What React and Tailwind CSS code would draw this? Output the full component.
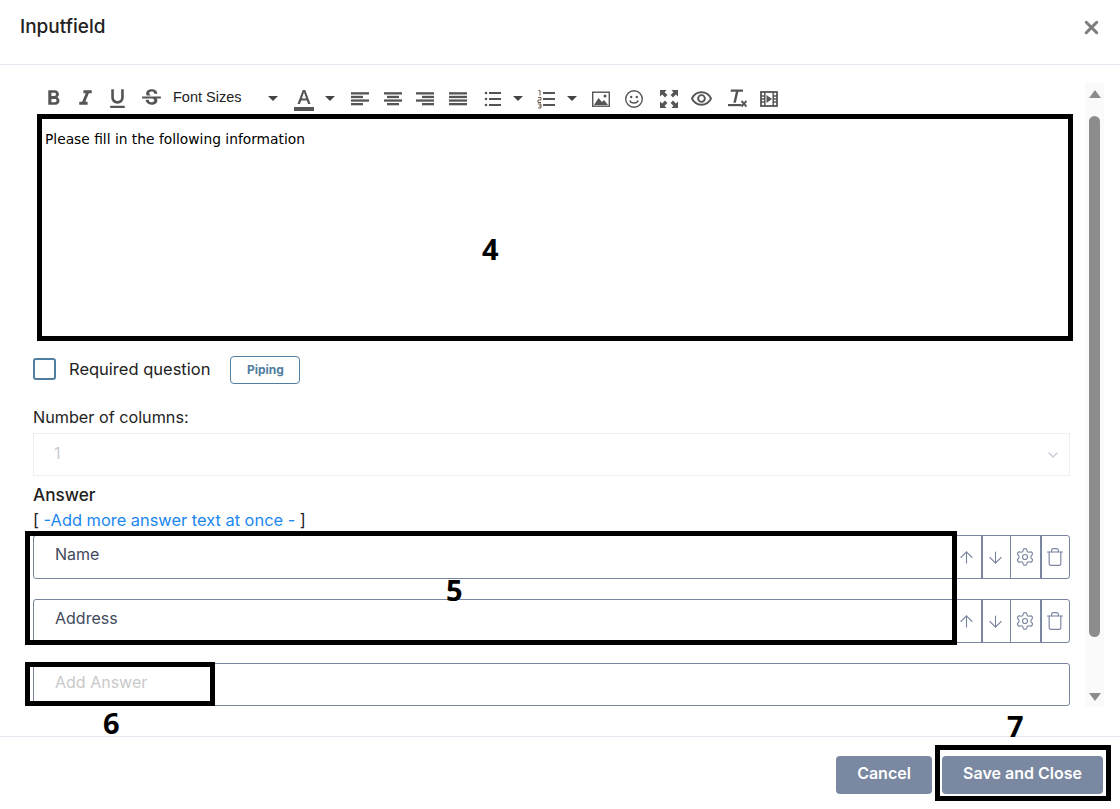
import React from 'react'
import { ArrowUp, ArrowDown, Settings, Trash, ChevronDown, X } from 'lucide-react'
import {
  MdFormatBold, MdFormatItalic, MdFormatUnderlined, MdStrikethroughS,
  MdFormatColorText, MdOutlineRemoveRedEye,
} from 'react-icons/md'

const Caret = ({ className }) => (
  <span className={`w-0 h-0 border-x-[5px] border-x-transparent border-t-[5px] border-t-[#444] ${className}`} />
)

const Tool = ({ icon: Icon, size = 25, className }) => (
  <span className={`w-5 flex justify-center text-[#555] ${className}`}>
    <Icon size={size} className="shrink-0" />
  </span>
)

const Svg = ({ children, className }) => (
  <span className={`w-5 flex justify-center ${className}`}>
    <svg width="20" height="20" viewBox="0 0 20 20" fill="#555" className="shrink-0">{children}</svg>
  </span>
)

const Bars = ({ rows, className }) => (
  <Svg className={className}>
    {rows.map(([x, w], i) => (
      <rect key={i} x={x} y={3.2 + i * 3.6} width={w} height="2.3" />
    ))}
  </Svg>
)

const BulletList = ({ className }) => (
  <Svg className={className}>
    <rect x="6" y="3" width="12" height="2" />
    <rect x="6" y="9" width="12" height="2" />
    <rect x="6" y="15" width="12" height="2" />
    <circle cx="3" cy="4" r="1.3" />
    <circle cx="3" cy="10" r="1.3" />
    <circle cx="3" cy="16" r="1.3" />
  </Svg>
)

const NumberList = ({ className }) => (
  <Svg className={className}>
    <rect x="7" y="3" width="12" height="2" />
    <rect x="7" y="9" width="12" height="2" />
    <rect x="7" y="15" width="12" height="2" />
    <path d="M2.5 1.5h1.5v5M2 8.5h3v2.5h-3v2.5h3M2 15h3v4h-3M3 17h2" fill="none" stroke="#6b5a4a" strokeWidth="1" />
  </Svg>
)

const ImageIcon = ({ className }) => (
  <Svg className={className}>
    <rect x="1.7" y="3.2" width="16.6" height="14" fill="none" stroke="#555" strokeWidth="1.4" />
    <path d="M3 16l4.5-7 3.5 4 2-2 4 5z" />
    <circle cx="14" cy="7" r="1.5" />
  </Svg>
)

const SmileIcon = ({ className }) => (
  <Svg className={className}>
    <circle cx="10" cy="10" r="8.3" fill="none" stroke="#555" strokeWidth="1.4" />
    <circle cx="7.2" cy="8" r="1.2" />
    <circle cx="12.8" cy="8" r="1.2" />
    <path d="M5.8 11.5c1 3.4 7.4 3.4 8.4 0" fill="none" stroke="#555" strokeWidth="1.4" />
  </Svg>
)

const ExpandIcon = ({ className }) => (
  <Svg className={className}>
    <path d="M1 1h6.5L5.6 3.2 8.4 6 6 8.4 3.2 5.6 1 7.5z" />
    <path d="M19 1h-6.5l1.9 2.2L11.6 6 14 8.4l2.8-2.8L19 7.5z" />
    <path d="M1 19h6.5l-1.9-2.2L8.4 14 6 11.6 3.2 14.4 1 12.5z" />
    <path d="M19 19h-6.5l1.9-2.2L11.6 14l2.4-2.4 2.8 2.8 2.2-1.9z" />
  </Svg>
)

const ClearIcon = ({ className }) => (
  <Svg className={className}>
    <path d="M4 0.5h12v2.2h-4.6l-2.6 11h-2.5l2.6-11H3.5z" />
    <rect x="1" y="15" width="13.5" height="2.2" />
    <path d="M14.5 12l5 5.5M19.5 12l-5 5.5" fill="none" stroke="#555" strokeWidth="1.9" />
  </Svg>
)

const FilmIcon = ({ className }) => (
  <Svg className={className}>
    <rect x="2" y="3" width="16" height="14" fill="none" stroke="#555" strokeWidth="1.8" />
    <path d="M5.8 3v14M14.2 3v14M2 7h3.8M2 10h3.8M2 13h3.8M14.2 7h3.8M14.2 10h3.8M14.2 13h3.8" fill="none" stroke="#555" strokeWidth="1.5" />
    <path d="M7.5 6l5.5 4-5.5 4z" />
  </Svg>
)

const Toolbar = () => (
  <div className="h-[33px] flex items-center pl-[10px]">
    <Tool icon={MdFormatBold} />
    <Tool icon={MdFormatItalic} className="ml-3" />
    <Tool icon={MdFormatUnderlined} className="ml-3" />
    <Tool icon={MdStrikethroughS} className="ml-[14px]" />
    <span className="ml-3 w-[71px] pb-[2px] text-[14.5px] text-[#222] font-['Liberation_Sans',sans-serif] whitespace-nowrap">Font Sizes</span>
    <Caret className="ml-[24px]" />
    <Tool icon={MdFormatColorText} size={24} className="ml-4" />
    <Caret className="ml-[11px]" />
    <Bars rows={[[1, 18], [1, 12], [1, 18], [1, 12]]} className="ml-[15px]" />
    <Bars rows={[[1, 18], [4, 12], [1, 18], [4, 12]]} className="ml-[13px]" />
    <Bars rows={[[1, 18], [7, 12], [1, 18], [7, 12]]} className="ml-3" />
    <Bars rows={[[1, 18], [1, 18], [1, 18], [1, 18]]} className="ml-[13px]" />
    <BulletList className="ml-[15px]" />
    <Caret className="ml-[10px]" />
    <NumberList className="ml-[13px]" />
    <Caret className="ml-[11px]" />
    <ImageIcon className="ml-[14px]" />
    <SmileIcon className="ml-[13px]" />
    <ExpandIcon className="ml-[15px]" />
    <Tool icon={MdOutlineRemoveRedEye} size={23} className="ml-3" />
    <ClearIcon className="ml-4" />
    <FilmIcon className="ml-3" />
  </div>
)

const AnswerRow = ({ value }) => (
  <div className="h-11 flex border border-[#7a869f] rounded-[3px] mb-5">
    <div className="flex-1 pl-[21px] pt-[8px] text-[16px] leading-[20px] text-[#3f4a5c]">{value}</div>
    <div className="flex text-[#7a869f]">
      <span className="w-[29px] pr-[2px] flex items-center justify-center border-l border-[#7a869f]"><ArrowUp size={19} strokeWidth={1.4} /></span>
      <span className="w-[29px] pr-[2px] flex items-center justify-center border-l-2 border-[#7a869f]"><ArrowDown size={19} strokeWidth={1.4} /></span>
      <span className="w-[30px] pr-[1px] flex items-center justify-center border-l border-[#7a869f]"><Settings size={20} strokeWidth={1.4} /></span>
      <span className="w-[29px] pr-[2px] flex items-center justify-center border-l-2 border-[#7a869f]"><Trash size={20} strokeWidth={1.4} /></span>
    </div>
  </div>
)

const Scrollbar = () => (
  <div className="w-[19px] h-[624px] mt-[18px] ml-[15px] bg-[#fafafa] flex flex-col items-center">
    <span className="mt-[7px] w-0 h-0 border-x-[6px] border-x-transparent border-b-[8px] border-b-[#8c8c8c]" />
    <span className="mt-[18px] w-[11px] h-[521px] rounded-full bg-[#8c8c8c]" />
    <span className="mt-[56px] w-0 h-0 border-x-[6px] border-x-transparent border-t-[8px] border-t-[#8c8c8c]" />
  </div>
)

// black annotation boxes + numbers drawn on top of the screenshot
const Annotations = () => (
  <>
    <div className="absolute left-[37px] top-[114px] w-[1036px] h-[227px] border-[5px] border-black" />
    <div className="absolute left-[25px] top-[531px] w-[932px] h-[114px] border-[5px] border-black" />
    <div className="absolute left-[25px] top-[662px] w-[190px] h-[44px] border-[5px] border-black" />
    <div className="absolute left-[935px] top-[745px] w-[176px] h-[56px] border-[5px] border-black" />
    <span className="absolute left-[482px] top-[229px] text-[29px] leading-[40px] font-bold text-black font-['Open_Sans',sans-serif]">4</span>
    <span className="absolute left-[446px] top-[570px] text-[29px] leading-[40px] font-bold text-black font-['Open_Sans',sans-serif]">5</span>
    <span className="absolute left-[103px] top-[703px] text-[29px] leading-[40px] font-bold text-black font-['Open_Sans',sans-serif]">6</span>
    <span className="absolute left-[1007px] top-[706px] text-[29px] leading-[40px] font-bold text-black font-['Open_Sans',sans-serif]">7</span>
  </>
)

export default function App() {
  return (
    <div className="relative w-[1120px] h-[809px] overflow-hidden bg-white flex flex-col font-['Inter',sans-serif]">
      <header className="h-[65px] shrink-0 border-b border-[#e6e9f2] flex items-center justify-between pl-5 pr-[18px] pb-[9px]">
        <h1 className="text-[19px] font-medium text-[#222]">Inputfield</h1>
        <X size={21} strokeWidth={3.5} className="text-[#7d7d7d]" />
      </header>

      <div className="h-[672px] shrink-0 border-b border-[#e6e9f2] flex">
        <div className="w-[1070px] shrink-0 pl-[33px] pt-[17px]">
          <Toolbar />
          <div className="ml-[7px] mt-[3px] h-[220px] pl-[5px] pt-[12px] text-[13.8px] leading-[18px] text-black font-['DejaVu_Sans',sans-serif]">
            Please fill in the following information
          </div>

          <div className="mt-[17px] h-[28px] flex items-center">
            <span className="w-[23px] h-[22px] rounded-[3px] border-2 border-[#4f7ea0]" />
            <span className="ml-[13px] text-[16.5px] text-[#222]">Required question</span>
            <span className="ml-5 mt-[2px] w-[70px] h-[28px] rounded-[4px] border border-[#4f7ea0] flex items-center justify-center text-[12px] font-bold text-[#4f7ea0]">Piping</span>
          </div>

          <label className="block mt-[22px] h-[28px] text-[16.2px] leading-[24px] text-[#222]">Number of columns:</label>
          <div className="h-[43px] border border-[#eeeeee] flex items-center justify-between pl-5 pr-2 pb-[4px] text-[16px] text-[#c8ccd4]">
            1
            <ChevronDown size={16} className="mt-[4px] text-[#c8ccd4]" />
          </div>

          <div className="mt-[7px] text-[17.2px] leading-[24px] font-medium text-[#222]">Answer</div>
          <div className="mt-[2px] text-[16.4px] leading-[22px] text-[#222]">[ <span className="text-[#1a86ef]">-Add more answer text at once -</span> ]</div>

          <div className="mt-[4px]">
            <AnswerRow value="Name" />
            <AnswerRow value="Address" />
            <div className="h-[43px] border border-[#7a869f] rounded-[3px] pl-[21px] pt-[8px] text-[16px] leading-[20px] text-[#c9c9c9]">Add Answer</div>
          </div>
        </div>
        <Scrollbar />
      </div>

      <footer className="flex justify-end gap-[10px] pt-[19px] pr-[17px]">
        <button className="w-[96px] h-[38px] pb-[4px] rounded-[4px] bg-[#7a88a1] text-white text-[16px] font-semibold">Cancel</button>
        <button className="w-[161px] h-[38px] pb-[4px] rounded-[4px] bg-[#7a88a1] text-white text-[16px] font-semibold">Save and Close</button>
      </footer>

      <Annotations />
    </div>
  )
}
